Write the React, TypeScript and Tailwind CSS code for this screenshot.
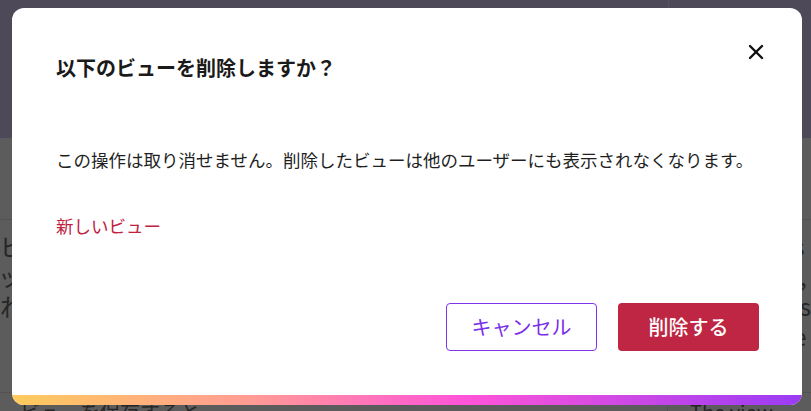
import { X } from 'lucide-react';

const jp = "font-['Noto_Sans_CJK_JP','Noto_Sans',sans-serif]";

export default function App() {
    return (
        <div className={`relative w-[811px] h-[411px] overflow-hidden bg-[#5c5c5c] ${jp}`}>
            {/* Page behind the dialog */}
            <div className="h-[138px] bg-[#4d4959] flex">
                <div className="w-[668px]" />
                <div className="flex-1 border-l border-[#57525f]" />
            </div>
            <div className="h-[82px] border-b border-[#525252]" />
            <div className="flex h-[173px] border-b border-[#525252]">
                <div className="w-[668px] pt-[14px] flex flex-col gap-[6px] text-[24px] leading-[24px] text-[#262626]">
                    <span>ビ</span>
                    <span className="-ml-[2px]">ッ</span>
                    <span>れ</span>
                </div>
                <div className="flex-1 pt-[14px] pl-[135px] flex flex-col gap-[6px] text-[24px] leading-[24px] text-[#262626]">
                    <span>s</span>
                    <span>l,</span>
                    <span>is</span>
                    <span>e</span>
                </div>
            </div>
            <div className="flex pt-[9px] text-[20px] leading-[20px] text-[#262626] whitespace-nowrap">
                <div className="w-[668px] pl-[20px] border-r border-[#525252]">ビューを保存すると</div>
                <div className="pl-[22px]">The view</div>
            </div>

            {/* Dialog */}
            <div className="absolute left-[12px] top-[8px] w-[790px] h-[397px] bg-white rounded-[12px] overflow-hidden flex flex-col">
                <div className="flex justify-between items-start pl-11 pr-[34px] pt-[32px]">
                    <h2 className="mt-[14px] text-[20px] leading-[28px] font-bold text-[#1a1a1a]">
                        以下のビューを削除しますか？
                    </h2>
                    <button className="w-6 h-6 flex items-center justify-center text-[#111]">
                        <X className="w-6 h-6" strokeWidth={2.4} />
                    </button>
                </div>

                <div className="px-11">
                    <p className="mt-[64px] text-[17.5px] leading-[28px] text-[#1f1f1f] whitespace-nowrap">
                        この操作は取り消せません。削除したビューは他のユーザーにも表示されなくなります。
                    </p>
                    <p className="mt-[38px] text-[17.5px] leading-[28px] text-[#c02141]">新しいビュー</p>
                </div>

                <div className="flex-1 flex justify-end items-start gap-[21px] pr-[43px] pt-[63px]">
                    <button className="w-[151px] h-12 rounded-[4px] border border-[#7f35ec] text-[#7a2fe8] text-[20px]">
                        キャンセル
                    </button>
                    <button className="w-[141px] h-12 rounded-[4px] bg-[#be2643] text-white text-[20px] font-medium">
                        削除する
                    </button>
                </div>

                <div className="h-[10px] bg-[linear-gradient(90deg,#ffcb5c_0%,#ff9c94_30%,#ff55d8_57%,#9a3cf3_100%)]" />
            </div>
        </div>
    );
}
